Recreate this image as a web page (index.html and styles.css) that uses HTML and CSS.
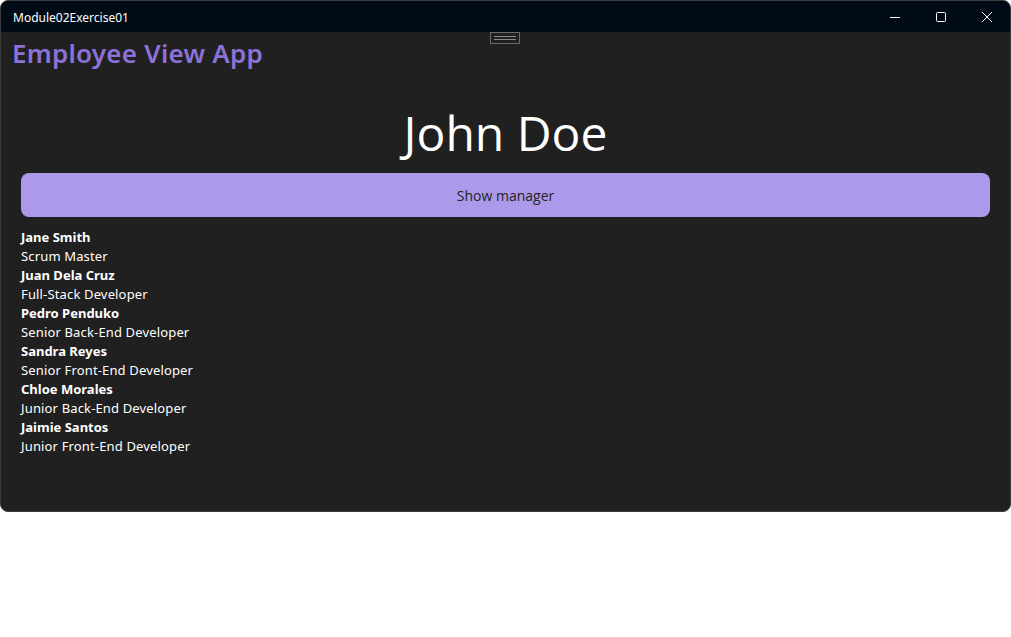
FILE: index.html
```html
<!DOCTYPE html>
<html>
<head>
<meta charset="utf-8">
<link rel="stylesheet" href="styles.css">
</head>
<body>
<div class="window">
  <div class="titlebar">
    <span class="title">Module02Exercise01</span>
    <div class="controls">
      <span class="ctl"><svg width="10" height="10" viewBox="0 0 10 10"><path d="M0 5.5H10" stroke="#fff" stroke-width="1"/></svg></span>
      <span class="ctl"><svg width="10" height="10" viewBox="0 0 10 10"><rect x="0.5" y="0.5" width="9" height="9" rx="1" fill="none" stroke="#fff" stroke-width="1"/></svg></span>
      <span class="ctl"><svg width="10" height="10" viewBox="0 0 10 10"><path d="M0 0L10 10M10 0L0 10" stroke="#fff" stroke-width="1"/></svg></span>
    </div>
  </div>
  <div class="content">
    <div class="handle"><span></span><span></span></div>
    <h1 class="apptitle">Employee View App</h1>
    <h2 class="name">John Doe</h2>
    <div class="btnwrap"><button class="btn">Show manager</button></div>
    <ul class="list">
      <li><b>Jane Smith</b><span>Scrum Master</span></li>
      <li><b>Juan Dela Cruz</b><span>Full-Stack Developer</span></li>
      <li><b>Pedro Penduko</b><span>Senior Back-End Developer</span></li>
      <li><b>Sandra Reyes</b><span>Senior Front-End Developer</span></li>
      <li><b>Chloe Morales</b><span>Junior Back-End Developer</span></li>
      <li><b>Jaimie Santos</b><span>Junior Front-End Developer</span></li>
    </ul>
  </div>
</div>
</body>
</html>
```
FILE: styles.css
```css
html, body {
  margin: 0;
  padding: 0;
  background: #ffffff;
}
.window {
  width: 1011px;
  height: 512px;
  box-sizing: border-box;
  border: 1px solid #3c3c3c;
  border-radius: 8px;
  overflow: hidden;
  background: #202020;
  display: flex;
  flex-direction: column;
  font-family: "Noto Sans", "Open Sans", sans-serif;
}
.titlebar {
  height: 31px;
  flex: none;
  background: #010b15;
  display: flex;
  align-items: center;
  justify-content: space-between;
}
.title {
  color: #ffffff;
  font-size: 12px;
  padding-left: 12px;
  padding-top: 1px;
}
.controls {
  display: flex;
  height: 100%;
}
.ctl {
  width: 46px;
  display: flex;
  align-items: center;
  justify-content: center;
}
.content {
  flex: 1;
  position: relative;
  padding: 0 20px;
}
.handle {
  position: absolute;
  left: 489px;
  top: 0;
  width: 30px;
  height: 12px;
  border: 1px solid #6a6a6a;
  box-sizing: border-box;
  display: flex;
  flex-direction: column;
  justify-content: center;
  align-items: center;
  gap: 2px;
}
.handle span {
  display: block;
  width: 22px;
  height: 1px;
  background: #8a8a8a;
}
.apptitle {
  margin: 0 0 0 -9px;
  padding-top: 3px;
  color: #8b72d8;
  font-size: 26px;
  font-weight: 600;
  line-height: 36px;
  height: 36px;
  letter-spacing: 0.25px;
}
.name {
  margin: 0;
  padding-top: 30px;
  text-align: center;
  color: #ffffff;
  font-family: "Open Sans", sans-serif;
  font-weight: 400;
  font-size: 48px;
  line-height: 64px;
  height: 64px;
}
.btnwrap {
  padding-top: 8px;
}
.btn {
  display: block;
  width: 100%;
  height: 44px;
  border: none;
  border-radius: 8px;
  background: #ac99ea;
  color: #242424;
  font-family: "Open Sans", sans-serif;
  font-size: 14px;
  padding: 0;
}
.list {
  list-style: none;
  margin: 0;
  padding: 11px 0 0 0;
  color: #ffffff;
  font-size: 13px;
  line-height: 19px;
  letter-spacing: 0.15px;
}
.list li {
  display: flex;
  flex-direction: column;
}
.list b {
  font-weight: 700;
  letter-spacing: 0;
}
```
